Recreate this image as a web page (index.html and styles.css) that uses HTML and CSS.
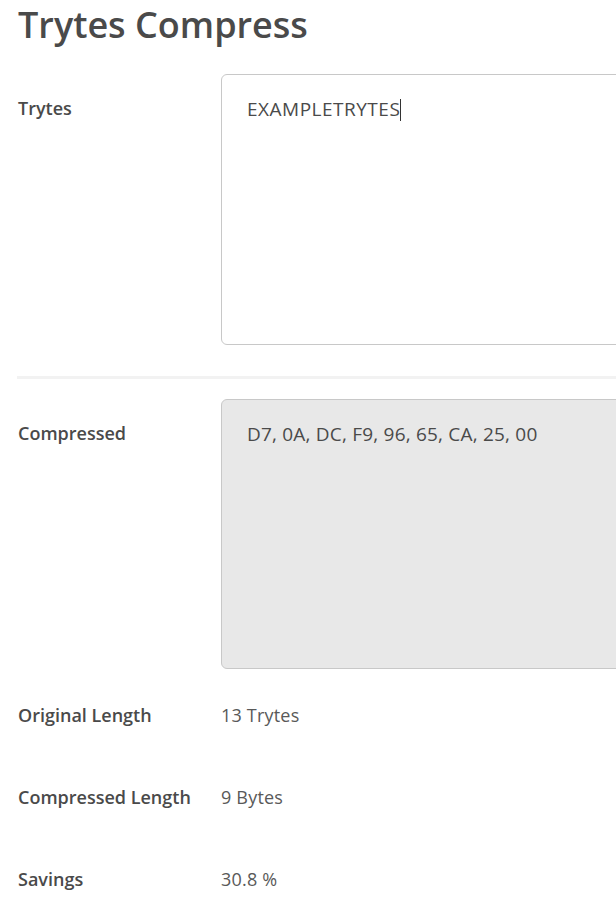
FILE: index.html
```html
<!DOCTYPE html>
<html>
<head>
<meta charset="utf-8">
<link rel="stylesheet" href="styles.css">
</head>
<body>
<div class="page">
  <h1 class="title">Trytes Compress</h1>
  <div class="row row-box row-first">
    <div class="label">Trytes</div>
    <div class="box box-input">EXAMPLETRYTES<span class="caret"></span></div>
  </div>
  <hr class="sep">
  <div class="row row-box row-second">
    <div class="label">Compressed</div>
    <div class="box box-readonly">D7, 0A, DC, F9, 96, 65, CA, 25, 00</div>
  </div>
  <div class="row row-stat">
    <div class="label">Original Length</div>
    <div class="value">13 Trytes</div>
  </div>
  <div class="row row-stat">
    <div class="label">Compressed Length</div>
    <div class="value">9 Bytes</div>
  </div>
  <div class="row row-stat">
    <div class="label">Savings</div>
    <div class="value">30.8 %</div>
  </div>
</div>
</body>
</html>
```
FILE: styles.css
```css
html, body {
  margin: 0;
  padding: 0;
  background: #fff;
  overflow: hidden;
}
.page {
  padding-left: 18px;
  width: 800px;
  font-family: "Open Sans", "Noto Sans", sans-serif;
  color: #4a4a4a;
}
.title {
  margin: 0;
  padding-top: 3px;
  font-size: 36px;
  line-height: 44px;
  font-weight: 600;
  color: #4a4a4a;
}
.row {
  display: grid;
  grid-template-columns: 203px 1fr;
}
.row-first {
  margin-top: 27px;
}
.row-second {
  margin-top: 20px;
}
.label {
  font-size: 18px;
  font-weight: 600;
  color: #4a4a4a;
  line-height: 24px;
}
.row-box .label {
  padding-top: 22px;
}
.box {
  box-sizing: border-box;
  height: 271px;
  border: 1px solid #c8c8c8;
  border-radius: 6px;
  padding: 22px 25px;
  font-size: 19px;
  line-height: 24px;
  color: #4a4a4a;
  letter-spacing: 0.2px;
}
.box-readonly {
  height: 270px;
}
.box-input {
  background: #fff;
  letter-spacing: 0.5px;
}
.box-readonly {
  background: #e8e8e8;
}
.caret {
  display: inline-block;
  width: 1px;
  height: 22px;
  background: #333;
  vertical-align: -5px;
}
.sep {
  margin: 31px 0 0 -1px;
  border: 0;
  height: 3px;
  background: #f2f2f2;
}
.row-box + .row-stat {
  margin-top: 34px;
}
.row-stat {
  margin-bottom: 58px;
}
.value {
  font-size: 18px;
  line-height: 24px;
  color: #595959;
  letter-spacing: 0.2px;
}
```
